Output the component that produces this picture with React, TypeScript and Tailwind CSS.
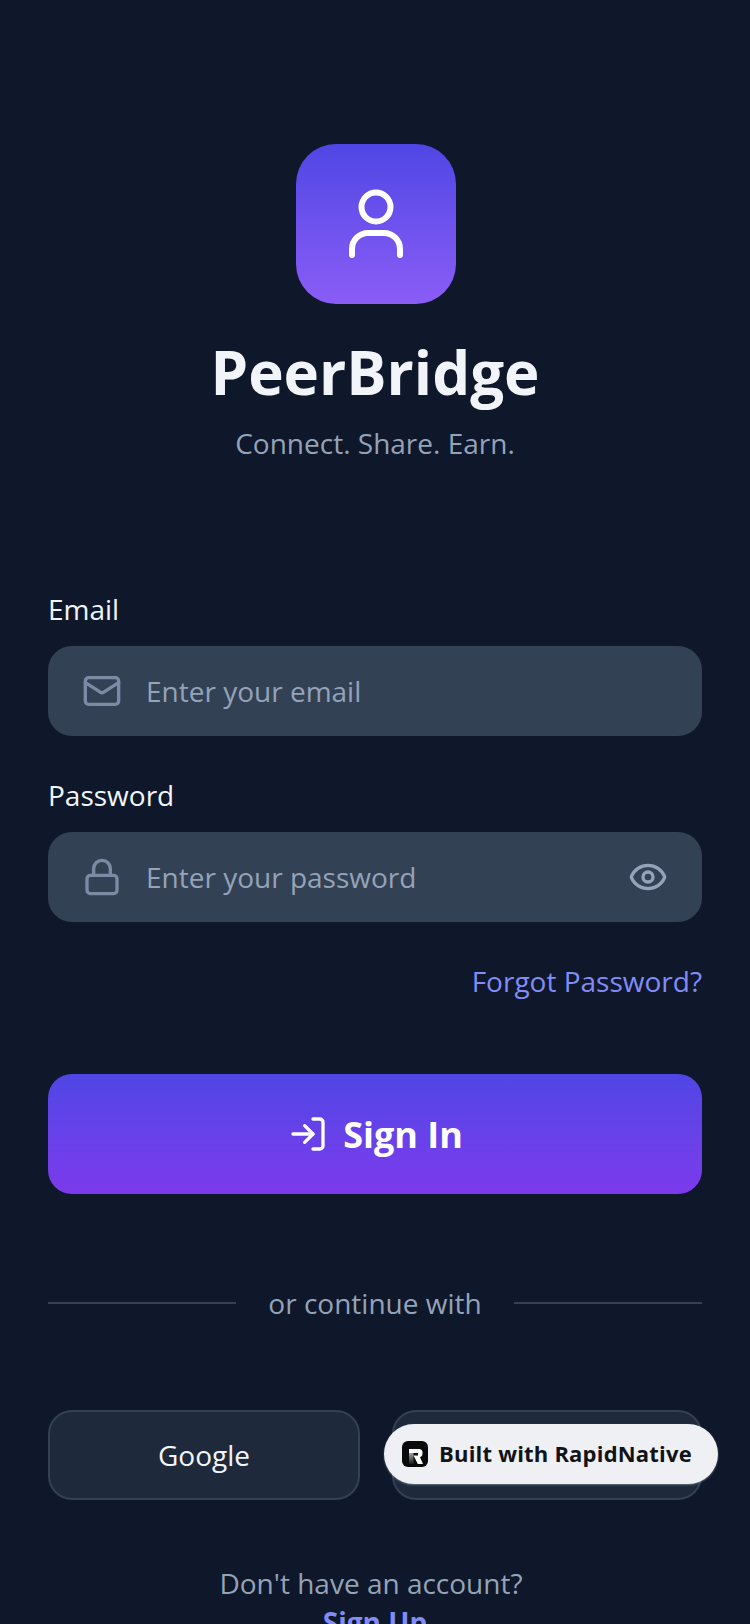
import React from 'react';
import { Eye, Lock, LogIn, Mail } from 'lucide-react';

const font = { fontFamily: '"Open Sans", sans-serif' };

const RapidLogo = () => (
  <svg width="26" height="26" viewBox="0 0 26 26">
    <defs>
      <linearGradient id="stem" x1="0" y1="0" x2="0" y2="1">
        <stop offset="0" stopColor="#d4d4d4" />
        <stop offset="1" stopColor="#1a1a1a" />
      </linearGradient>
    </defs>
    <rect width="26" height="26" rx="6" fill="#0a0a0a" />
    <rect x="7" y="8" width="4.5" height="15" fill="url(#stem)" />
    <path d="M7 8h10q3.5 0 3.5 3.5v1.5q0 2.5-2.5 3.2l3 6.8h-5.2l-4.3-8.5h4.5v-2.5H7z" fill="#fff" />
  </svg>
);

const App: React.FC = () => {
  return (
    <div style={font} className="relative h-[1624px] w-[750px] overflow-hidden bg-[#0f172a] px-12 pt-[144px]">
      <div className="flex flex-col items-center">
        <div className="ml-[2px] flex h-40 w-40 items-center justify-center rounded-[40px] bg-gradient-to-b from-[#4f46e5] to-[#8b5cf6]">
          <svg width="60" height="80" viewBox="0 0 60 80" fill="none" stroke="#fff" strokeWidth="6" strokeLinecap="round">
            <circle cx="30" cy="23" r="14.5" />
            <path d="M6 71v-6a16 16 0 0 1 16-16h16a16 16 0 0 1 16 16v6" />
          </svg>
        </div>
        <h1 className="mt-[28px] text-[60px] leading-[80px] font-bold text-[#f1f5f9]">PeerBridge</h1>
        <p className="mt-[11px] text-[28px] leading-[40px] text-[#94a3b8]">Connect. Share. Earn.</p>
      </div>

      <div className="mt-[128px]">
        <label className="block text-[28px] leading-[36px] text-[#f1f5f9]">Email</label>
        <div className="mt-[19px] flex h-[90px] items-center gap-6 rounded-3xl bg-[#334155] px-[34px]">
          <Mail size={40} strokeWidth={2} className="shrink-0 text-[#7c8ba3]" />
          <span className="text-[28px] text-[#94a3b8]">Enter your email</span>
        </div>

        <label className="mt-[41px] block text-[28px] leading-[36px] text-[#f1f5f9]">Password</label>
        <div className="mt-[19px] flex h-[90px] items-center gap-6 rounded-3xl bg-[#334155] px-[34px]">
          <Lock size={40} strokeWidth={2} className="shrink-0 text-[#7c8ba3]" />
          <span className="flex-1 text-[28px] text-[#94a3b8]">Enter your password</span>
          <Eye size={40} strokeWidth={2} className="shrink-0 text-[#94a3b8]" />
        </div>

        <div className="mt-[39px] text-right text-[28px] leading-[40px] text-[#818cf8]">Forgot Password?</div>

        <button className="mt-[73px] flex h-[120px] w-full items-center justify-center gap-4 rounded-3xl bg-gradient-to-b from-[#4f46e5] to-[#7c3aed] text-white">
          <LogIn size={40} strokeWidth={2} className="mr-[-1px] ml-[1px]" />
          <span className="mt-[2px] text-[36px] font-bold">Sign In</span>
        </button>

        <div className="mt-[89px] flex items-center gap-8">
          <div className="h-[2px] flex-1 bg-[#334155]" />
          <span className="text-[28px] leading-[40px] text-[#94a3b8]">or continue with</span>
          <div className="h-[2px] flex-1 bg-[#334155]" />
        </div>

        <div className="mt-[87px] flex gap-8">
          <button className="flex h-[90px] w-[312px] items-center justify-center rounded-3xl border-2 border-[#334155] bg-[#1e293b] text-[28px] text-[#f1f5f9]">
            Google
          </button>
          <div className="h-[90px] flex-1 rounded-3xl border-2 border-[#334155] bg-[#1e293b]" />
        </div>

        <div className="mt-[64px] pr-2 text-center text-[28px] leading-[38px] text-[#94a3b8]">Don't have an account?</div>
        <div className="text-center text-[28px] leading-[40px] font-bold text-[#818cf8]">Sign Up</div>
      </div>

      <div className="absolute top-[1424px] left-[384px] flex h-[60px] w-[334px] items-center gap-[11px] rounded-full bg-[#eff0f3] pl-[18px] shadow-[0_1px_2px_rgba(148,163,184,0.6)]">
        <RapidLogo />
        <span className="mb-[2px] text-[22px] font-bold tracking-[0.2px] text-[#111318]">Built with RapidNative</span>
      </div>
    </div>
  );
};

export default App;
